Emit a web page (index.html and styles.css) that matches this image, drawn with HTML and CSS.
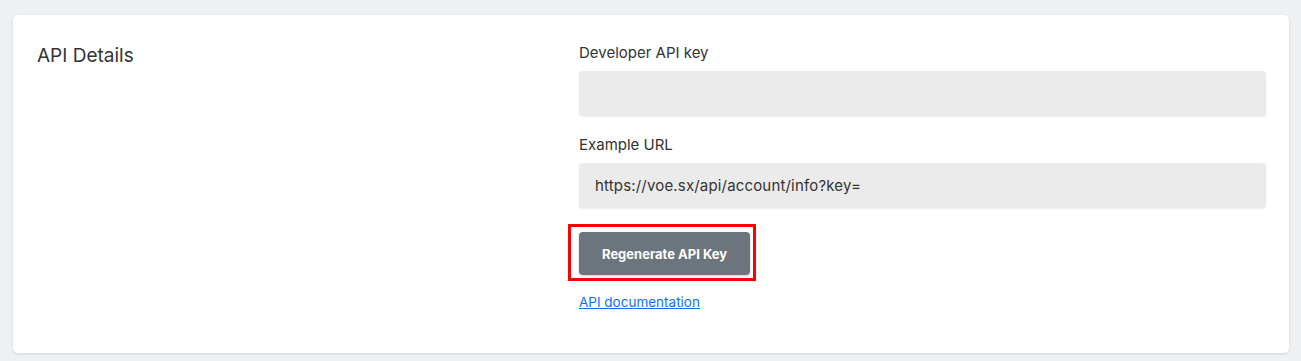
FILE: index.html
```html
<!DOCTYPE html>
<html lang="en">
<head>
    <meta charset="UTF-8">
    <meta name="viewport" content="width=device-width, initial-scale=1.0">
    <title>API Details</title>
    <link rel="stylesheet" href="styles.css">
</head>
<body>
    <div class="card">
        <h2 class="card-title">API Details</h2>
        <div class="card-body">
            <label class="field-label">Developer API key</label>
            <div class="field"></div>

            <label class="field-label second">Example URL</label>
            <div class="field">https://voe.sx/api/account/info?key=</div>

            <div class="btn-frame">
                <button class="btn">Regenerate API Key</button>
            </div>

            <a class="doc-link" href="#">API documentation</a>
        </div>
    </div>
</body>
</html>
```

FILE: styles.css
```css
* {
    margin: 0;
    padding: 0;
    box-sizing: border-box;
    font-family: 'Inter', 'Noto Sans', sans-serif;
}

body {
    background: #eef1f4;
    padding: 15px 12px 9px 13px;
    color: #333;
}

.card {
    background: #fff;
    border-radius: 5px;
    box-shadow: 0 1px 3px rgba(0, 0, 0, 0.12);
    padding: 28px 23px 42px 24px;
    display: grid;
    grid-template-columns: 542px 1fr;
}

.card-title {
    font-size: 19px;
    font-weight: 400;
    line-height: 26px;
    color: #333;
}

.card-body {
    display: flex;
    flex-direction: column;
    align-items: flex-start;
}

.field-label {
    font-size: 15px;
    line-height: 20px;
    color: #333;
    margin-bottom: 8px;
}

.field-label.second {
    margin-top: 19px;
}

.field {
    width: 100%;
    height: 45px;
    background: #ebebeb;
    border-radius: 4px;
    box-shadow: 0 1px 2px rgba(0, 0, 0, 0.08);
    padding: 0 16px;
    display: flex;
    align-items: center;
    font-size: 15px;
    letter-spacing: 0.17px;
    color: #333;
}

.btn-frame {
    margin: 16px 0 0 -11px;
    border: 3px solid #f00;
    padding: 5px 3px 3px 8px;
}

.btn {
    background: #6c757d;
    color: #fff;
    border: none;
    border-radius: 4px;
    font-size: 13px;
    font-weight: 700;
    height: 43px;
    padding: 0 23px;
    box-shadow: 0 1px 3px rgba(0, 0, 0, 0.2);
}

.doc-link {
    margin-top: 12px;
    font-size: 13.5px;
    line-height: 18px;
    color: #0d6efd;
}
```
